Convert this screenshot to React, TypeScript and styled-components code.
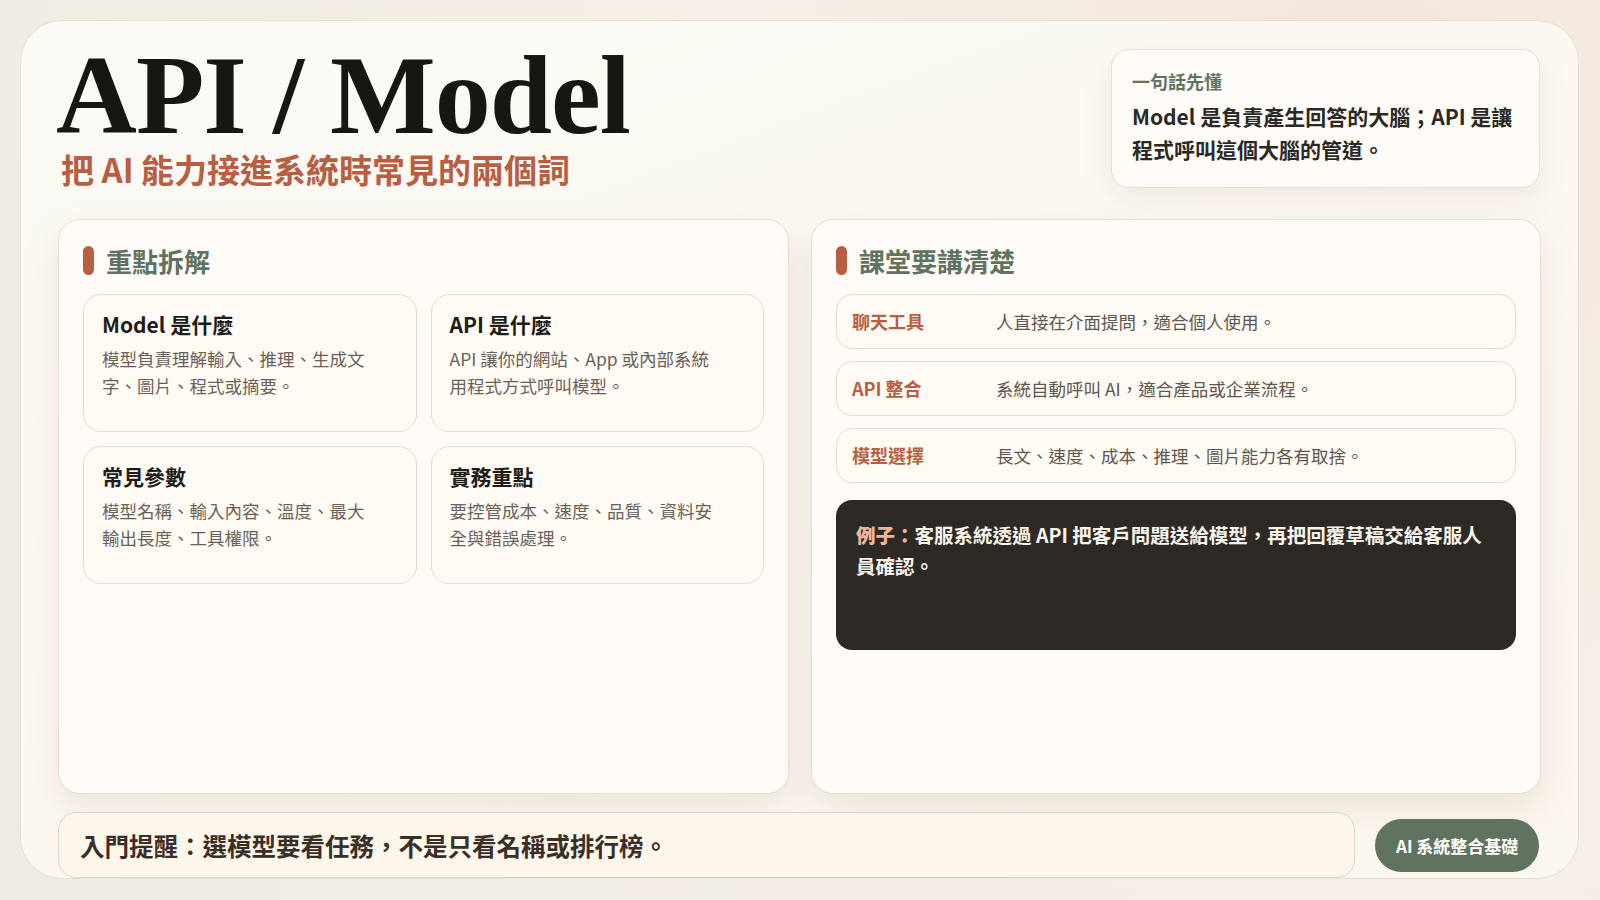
import styled, { createGlobalStyle } from "styled-components";

const GlobalStyle = createGlobalStyle`
  html, body {
    margin: 0;
    padding: 0;
    width: 1600px;
    height: 900px;
    overflow: hidden;
    background: radial-gradient(circle at 85% 15%, #f3e6da 0%, #f6f0e8 40%, #efebe2 100%);
    font-family: "Noto Sans CJK TC", "Noto Sans", sans-serif;
  }
`;

const Frame = styled.div`
  position: relative;
  margin: 20px 0 0 20px;
  width: 1559px;
  height: 859px;
  box-sizing: border-box;
  border: 1px solid #e9e0d3;
  border-radius: 42px;
  background: linear-gradient(160deg, #fcfaf5 0%, #fbf6ee 100%);
  padding: 24px 38px 0 37px;
  display: flex;
  flex-direction: column;
`;

const Header = styled.header`
  display: flex;
  justify-content: space-between;
  align-items: flex-start;
  height: 175px;
`;

const TitleBlock = styled.div`
  display: flex;
  flex-direction: column;
`;

const Title = styled.h1`
  margin: -6px 0 0 -2px;
  font-family: "Liberation Serif", serif;
  font-weight: 700;
  font-size: 112px;
  line-height: 112px;
  color: #181612;
  letter-spacing: -1px;
`;

const Subtitle = styled.h2`
  margin: -4px 0 0 3px;
  font-size: 33px;
  font-weight: 700;
  color: #b85f43;
  line-height: 44px;
`;

const Callout = styled.div`
  width: 429px;
  height: 139px;
  box-sizing: border-box;
  margin-top: 4px;
  background: #fffcf7;
  border: 1px solid #e9dfd2;
  border-radius: 18px;
  box-shadow: 0 10px 30px rgba(150, 120, 90, 0.12);
  padding: 18px 20px;
`;

const CalloutLabel = styled.div`
  font-size: 18px;
  font-weight: 700;
  color: #5f7360;
  margin-bottom: 6px;
`;

const CalloutText = styled.div`
  font-size: 21px;
  font-weight: 700;
  color: #2b2925;
  line-height: 33px;
`;

const Columns = styled.div`
  display: grid;
  grid-template-columns: 731px 730px;
  gap: 22px;
  height: 579px;
`;

const Panel = styled.section`
  background: #fffcf7;
  border: 1px solid #e7dccd;
  border-radius: 22px;
  box-shadow: 0 14px 36px rgba(140, 115, 85, 0.14);
  padding: 24px 24px;
  box-sizing: border-box;
  display: flex;
  flex-direction: column;
`;

const PanelHeading = styled.h3`
  display: flex;
  align-items: center;
  gap: 12px;
  margin: 0 0 16px;
  font-size: 26px;
  font-weight: 700;
  color: #5f7360;
  height: 34px;
  &::before {
    content: "";
    width: 11px;
    height: 29px;
    border-radius: 6px;
    background: #b85f43;
  }
`;

const CardGrid = styled.div`
  display: grid;
  grid-template-columns: 1fr 1fr;
  gap: 14px;
`;

const Card = styled.div`
  height: 138px;
  box-sizing: border-box;
  border: 1px solid #e6dbcd;
  border-radius: 18px;
  background: #fffaf3;
  padding: 14px 40px 16px 18px;
`;

const CardTitle = styled.div`
  font-size: 21px;
  font-weight: 700;
  color: #1f1d1a;
  margin-bottom: 6px;
`;

const CardText = styled.div`
  font-size: 17.5px;
  color: #6a625a;
  line-height: 27px;
`;

const RowList = styled.div`
  display: flex;
  flex-direction: column;
  gap: 12px;
`;

const Row = styled.div`
  height: 55px;
  box-sizing: border-box;
  border: 1px solid #e6dbcd;
  border-radius: 16px;
  background: #fffaf3;
  display: grid;
  grid-template-columns: 144px 1fr;
  align-items: center;
  padding: 0 15px;
`;

const RowLabel = styled.div`
  font-size: 18px;
  font-weight: 700;
  color: #b85f43;
`;

const RowText = styled.div`
  font-size: 17.5px;
  color: #5e5750;
`;

const Example = styled.div`
  margin-top: 17px;
  height: 150px;
  box-sizing: border-box;
  background: #2d2a25;
  border-radius: 16px;
  padding: 19px 20px;
  font-size: 19.5px;
  font-weight: 700;
  line-height: 31px;
  color: #f8f4ec;
`;

const ExampleLabel = styled.strong`
  color: #f0b49a;
`;

const Footer = styled.div`
  display: flex;
  align-items: center;
  gap: 20px;
  margin-top: 18px;
`;

const Reminder = styled.div`
  width: 1297px;
  height: 66px;
  box-sizing: border-box;
  background: #fdf6ea;
  border: 1px solid #e2d5c3;
  border-radius: 18px;
  display: flex;
  align-items: center;
  padding: 0 21px;
  font-size: 24.5px;
  font-weight: 700;
  color: #3a2f28;
`;

const Pill = styled.div`
  height: 53px;
  padding: 0 21px;
  border-radius: 27px;
  background: #5f735f;
  color: #fff;
  font-size: 17px;
  font-weight: 700;
  display: flex;
  align-items: center;
  white-space: nowrap;
`;

const cards = [
  { t: "Model 是什麼", d: "模型負責理解輸入、推理、生成文字、圖片、程式或摘要。" },
  { t: "API 是什麼", d: "API 讓你的網站、App 或內部系統用程式方式呼叫模型。" },
  { t: "常見參數", d: "模型名稱、輸入內容、溫度、最大輸出長度、工具權限。" },
  { t: "實務重點", d: "要控管成本、速度、品質、資料安全與錯誤處理。" },
];

const rows = [
  { l: "聊天工具", d: "人直接在介面提問，適合個人使用。" },
  { l: "API 整合", d: "系統自動呼叫 AI，適合產品或企業流程。" },
  { l: "模型選擇", d: "長文、速度、成本、推理、圖片能力各有取捨。" },
];

export default function App() {
  return (
    <>
      <GlobalStyle />
      <Frame>
        <Header>
          <TitleBlock>
            <Title>API / Model</Title>
            <Subtitle>把 AI 能力接進系統時常見的兩個詞</Subtitle>
          </TitleBlock>
          <Callout>
            <CalloutLabel>一句話先懂</CalloutLabel>
            <CalloutText>Model 是負責產生回答的大腦；API 是讓程式呼叫這個大腦的管道。</CalloutText>
          </Callout>
        </Header>
        <Columns>
          <Panel>
            <PanelHeading>重點拆解</PanelHeading>
            <CardGrid>
              {cards.map((c) => (
                <Card key={c.t}>
                  <CardTitle>{c.t}</CardTitle>
                  <CardText>{c.d}</CardText>
                </Card>
              ))}
            </CardGrid>
          </Panel>
          <Panel>
            <PanelHeading>課堂要講清楚</PanelHeading>
            <RowList>
              {rows.map((r) => (
                <Row key={r.l}>
                  <RowLabel>{r.l}</RowLabel>
                  <RowText>{r.d}</RowText>
                </Row>
              ))}
            </RowList>
            <Example>
              <ExampleLabel>例子：</ExampleLabel>客服系統透過 API 把客戶問題送給模型，再把回覆草稿交給客服人員確認。
            </Example>
          </Panel>
        </Columns>
        <Footer>
          <Reminder>入門提醒：選模型要看任務，不是只看名稱或排行榜。</Reminder>
          <Pill>AI 系統整合基礎</Pill>
        </Footer>
      </Frame>
    </>
  );
}
